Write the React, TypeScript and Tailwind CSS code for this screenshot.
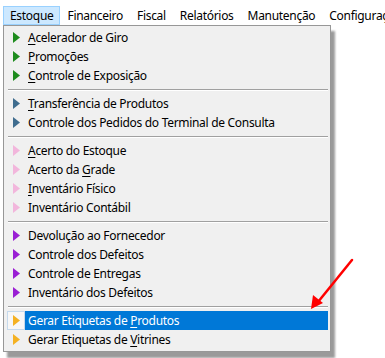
import type { ReactNode } from 'react';

type Item = { label: ReactNode; color: string; active?: boolean };

const u = (s: string) => <span className="underline underline-offset-2">{s}</span>;

const groups: Item[][] = [
  [
    { label: <>{u('A')}celerador de Giro</>, color: '#1e8c1e' },
    { label: <>{u('P')}romoções</>, color: '#1e8c1e' },
    { label: <>{u('C')}ontrole de Exposição</>, color: '#1e8c1e' },
  ],
  [
    { label: <>{u('T')}ransferência de Produtos</>, color: '#3f6c8e' },
    { label: 'Controle dos Pedidos do Terminal de Consulta', color: '#3f6c8e' },
  ],
  [
    { label: <>{u('A')}certo do Estoque</>, color: '#f2b6dc' },
    { label: <>Acerto da {u('G')}rade</>, color: '#f2b6dc' },
    { label: <>{u('I')}nventário Físico</>, color: '#f2b6dc' },
    { label: 'Inventário Contábil', color: '#f2b6dc' },
  ],
  [
    { label: 'Devolução ao Fornecedor', color: '#9a1fd4' },
    { label: 'Controle dos Defeitos', color: '#9a1fd4' },
    { label: 'Controle de Entregas', color: '#9a1fd4' },
    { label: 'Inventário dos Defeitos', color: '#9a1fd4' },
  ],
  [
    { label: <>Gerar Etiquetas de {u('P')}rodutos</>, color: '#f4b122', active: true },
    { label: <>Gerar Etiquetas de {u('V')}itrines</>, color: '#f4b122' },
  ],
];

function Tri({ color }: { color: string }) {
  return (
    <svg width="7" height="11" viewBox="0 0 7 11">
      <polygon points="0,0 7,5.5 0,11" fill={color} />
    </svg>
  );
}

function MenuRow({ item }: { item: Item }) {
  return (
    <div className="flex h-[19px] items-stretch">
      <div
        className={
          item.active
            ? 'ml-[3px] flex w-[18px] items-center justify-center border border-[#c5d9ec] bg-[#f7f7f7]'
            : 'ml-[3px] flex w-[18px] items-center justify-center'
        }
      >
        <Tri color={item.color} />
      </div>
      <div
        className={
          item.active
            ? 'mr-[2px] flex flex-1 items-center bg-[#0078d7] pl-[3px] text-white'
            : 'mr-[2px] flex flex-1 items-center pl-[3px] text-black'
        }
      >
        <span className="whitespace-pre">{item.label}</span>
      </div>
    </div>
  );
}

export default function App() {
  const bar = ['Financeiro', 'Fiscal', 'Relatórios', 'Manutenção', 'Configurações'];
  return (
    <div
      className="relative h-[358px] w-[385px] overflow-hidden bg-white text-[12px] leading-none tracking-[-0.3px]"
      style={{ fontFamily: '"Noto Sans", "Open Sans", sans-serif' }}
    >
      <div className="h-[6px]" />
      <div className="flex h-[19px] items-stretch pl-[3px] whitespace-nowrap">
        <div className="flex items-center border border-[#99d1ff] bg-[#cce8ff] px-[6px]">Estoque</div>
        {bar.map(b => (
          <div key={b} className="flex items-center px-[7px]">
            {b}
          </div>
        ))}
      </div>
      <div className="relative ml-[3px] w-[328px]">
        <div className="absolute left-[4px] top-[6px] h-full w-full bg-[#9a9a9a] blur-[1px]" />
        <div className="relative border border-[#979797] bg-[#f0f0f0] py-[2px]">
          {groups.map((g, gi) => (
            <div key={gi}>
              {gi > 0 && (
                <div className="flex h-[9px] flex-col justify-center pl-[4px] pr-[2px]">
                  <div className="h-px bg-[#a0a0a0]" />
                  <div className="h-px bg-white" />
                </div>
              )}
              {g.map((it, ii) => (
                <MenuRow key={ii} item={it} />
              ))}
            </div>
          ))}
        </div>
      </div>
      <svg className="absolute left-0 top-0" width="385" height="358">
        <line x1="352" y1="260" x2="318" y2="302" stroke="#ff0000" strokeWidth="2.5" strokeLinecap="round" />
        <polygon points="311,309 313,295 323,303" fill="#ff0000" />
      </svg>
    </div>
  );
}
